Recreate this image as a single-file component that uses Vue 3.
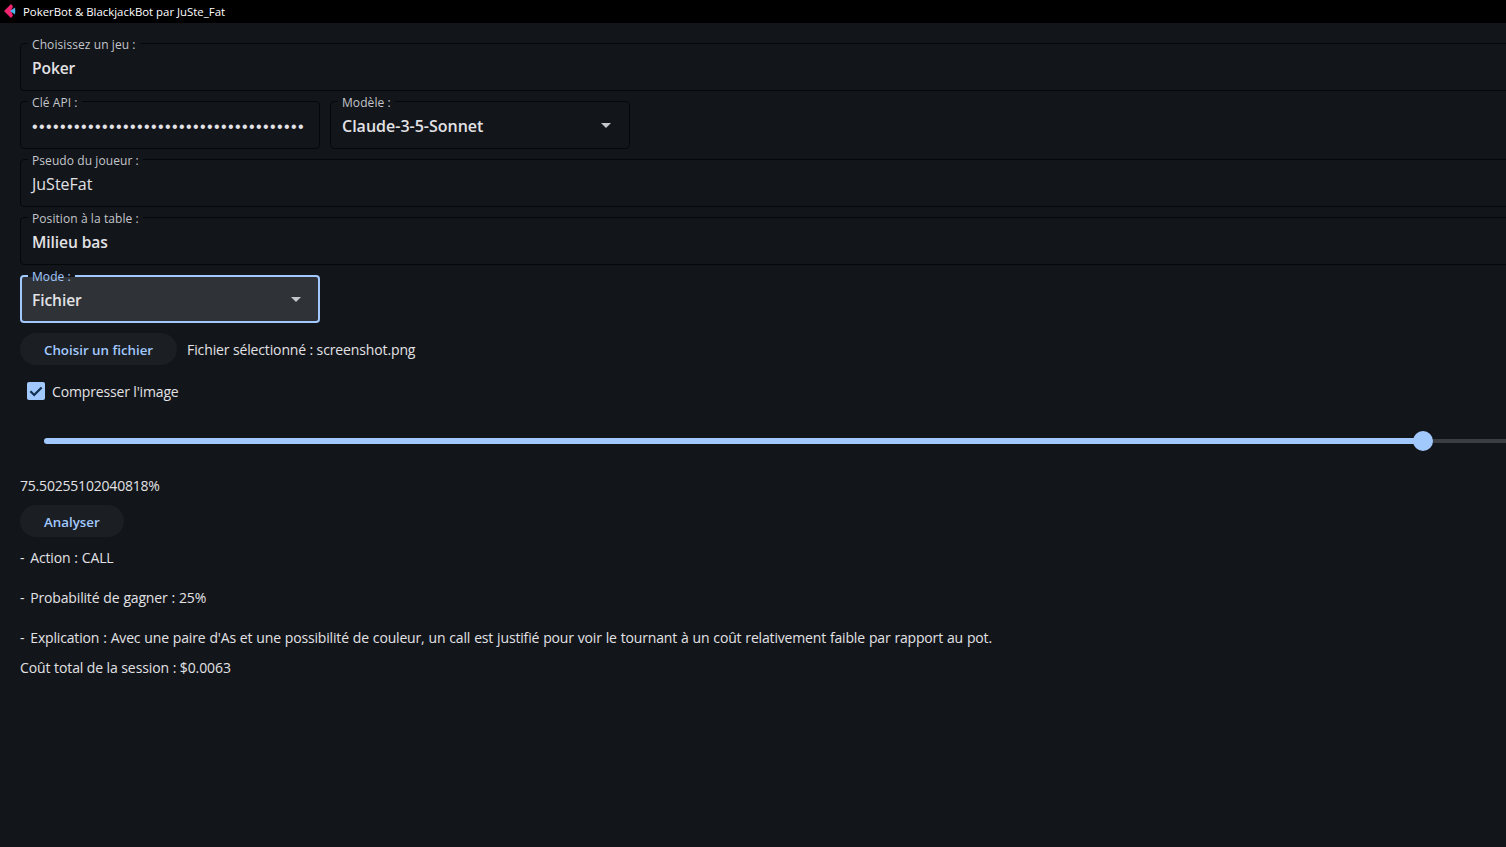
<script setup>
const pct = 75.50255102040818
</script>

<template>
  <div class="app">
    <header class="titlebar">
      <svg class="logo" width="23" height="23" viewBox="0 0 23 23">
        <path d="M4 11 L11 4 L13 6.5 L11 11 L13 15.5 L11 18 Z" fill="#f0246f"/>
        <path d="M10 11 L15 7.5 Q15.6 11 15 14.5 Z" fill="#4fb6ea"/>
      </svg>
      <span>PokerBot &amp; BlackjackBot par JuSte_Fat</span>
    </header>

    <main class="content">
      <div class="field">
        <label class="legend">Choisissez un jeu :</label>
        <span class="value strong">Poker</span>
      </div>

      <div class="row">
        <div class="field narrow">
          <label class="legend">Clé API :</label>
          <span class="value dots">•••••••••••••••••••••••••••••••••••••••</span>
        </div>
        <div class="field narrow">
          <label class="legend">Modèle :</label>
          <span class="value strong wide">Claude-3-5-Sonnet</span>
          <span class="caret"></span>
        </div>
      </div>

      <div class="field">
        <label class="legend">Pseudo du joueur :</label>
        <span class="value">JuSteFat</span>
      </div>

      <div class="field">
        <label class="legend">Position à la table :</label>
        <span class="value strong">Milieu bas</span>
      </div>

      <div class="field narrow focused">
        <label class="legend">Mode :</label>
        <span class="value strong">Fichier</span>
        <span class="caret"></span>
      </div>

      <div class="file-row">
        <button class="pill file-btn">Choisir un fichier</button>
        <span class="nudge">Fichier sélectionné : screenshot.png</span>
      </div>

      <div class="check-row">
        <span class="checkbox">
          <svg width="18" height="18" viewBox="0 0 18 18">
            <path d="M3.4 9.2 L7.2 13 L14.6 5.4" fill="none" stroke="#11304d" stroke-width="2.2"/>
          </svg>
        </span>
        <span class="nudge">Compresser l'image</span>
      </div>

      <div class="slider">
        <div class="track">
          <div class="fill" :style="{ width: pct + '%' }">
            <span class="thumb"></span>
          </div>
        </div>
      </div>

      <p class="percent">{{ pct }}%</p>

      <button class="pill analyse-btn">Analyser</button>

      <section class="result">
        <p><span class="dash">-</span> Action : CALL</p>
        <p><span class="dash">-</span> Probabilité de gagner : 25%</p>
        <p><span class="dash">-</span> Explication : Avec une paire d'As et une possibilité de couleur, un call est justifié pour voir le tournant à un coût relativement faible par rapport au pot.</p>
      </section>

      <p class="cost">Coût total de la session : $0.0063</p>
    </main>
  </div>
</template>

<style scoped>
.app {
  width: 1506px;
  height: 847px;
  overflow: hidden;
  background: #12151a;
  color: #e2e2e5;
  font-family: "Open Sans", "Noto Sans", sans-serif;
  font-size: 14px;
  line-height: 20px;
}
.titlebar {
  height: 23px;
  background: #000;
  color: #fff;
  display: flex;
  align-items: center;
  font-size: 11.4px;
  box-sizing: border-box;
}
.logo { flex: none; }
.content {
  width: 1870px;
  padding: 20px 0 0 20px;
  display: flex;
  flex-direction: column;
  align-items: flex-start;
}
.field {
  position: relative;
  box-sizing: border-box;
  width: 1870px;
  height: 48px;
  margin-bottom: 10px;
  border: 1px solid #05070a;
  border-radius: 4px;
  display: flex;
  align-items: center;
  padding: 0 11px;
  font-size: 16px;
}
.row { display: flex; gap: 10px; }
.narrow { width: 300px; }
.legend {
  position: absolute;
  left: 7px;
  top: -7px;
  padding: 0 4px;
  background: #12151a;
  font-size: 12px;
  line-height: 16px;
  letter-spacing: 0.08px;
  color: #c4c6cb;
}
.value { color: #e2e2e5; padding-top: 2px; }
.strong { font-weight: 600; font-size: 15.6px; letter-spacing: -0.1px; }
.wide { font-size: 16px; letter-spacing: 0; }
.dots {
  font-size: 16px;
  letter-spacing: 1.4px;
  font-family: "Liberation Sans", sans-serif;
  padding-top: 4px;
}
.caret {
  position: absolute;
  right: 18px;
  top: 21px;
  border-left: 5px solid transparent;
  border-right: 5px solid transparent;
  border-top: 5px solid #c4c6cb;
}
.focused {
  border: 2px solid #a2c9fe;
  background: #2f3236;
  padding: 0 10px;
}
.focused .legend {
  left: 6px;
  top: -8px;
  color: #a2c9fe;
  background: linear-gradient(#12151a 50%, #2f3236 50%);
}
.focused .caret { right: 17px; top: 20px; }
.file-row {
  display: flex;
  align-items: center;
  gap: 10px;
  margin-bottom: 10px;
  height: 32px;
  letter-spacing: -0.13px;
}
.nudge { padding-top: 2px; }
.pill {
  height: 32px;
  border: 0;
  border-radius: 16px;
  background: #1b1e23;
  color: #a2c9fe;
  font-family: inherit;
  font-size: 13.3px;
  font-weight: 600;
  padding: 2px 24px 0;
}
.check-row {
  display: flex;
  align-items: center;
  gap: 7px;
  padding-left: 7px;
  height: 32px;
  letter-spacing: -0.15px;
}
.checkbox {
  width: 18px;
  height: 18px;
  background: #a2c9fe;
  border-radius: 2px;
  display: block;
}
.checkbox svg { display: block; }
.slider {
  margin-top: 10px;
  height: 48px;
  width: 1874px;
  padding: 0 24px;
  box-sizing: border-box;
  display: flex;
  align-items: center;
}
.track {
  width: 100%;
  height: 4px;
  border-radius: 2px;
  background: #3a3d42;
}
.fill {
  position: relative;
  height: 6px;
  top: -1px;
  border-radius: 3px;
  background: #a2c9fe;
}
.thumb {
  position: absolute;
  right: -10px;
  top: -7px;
  width: 20px;
  height: 20px;
  border-radius: 50%;
  background: #a2c9fe;
}
p { margin: 0; }
.percent { margin-top: 11px; margin-bottom: 9px; letter-spacing: -0.2px; }
.analyse-btn { margin-bottom: 11px; }
.result { letter-spacing: -0.17px; word-spacing: 0.5px; }
.dash { margin-right: 2px; }
.result p { margin-bottom: 20px; }
.result p:last-child { margin-bottom: 10px; }
.cost { letter-spacing: -0.09px; }
</style>

<style>
html, body { margin: 0; overflow: hidden; background: #12151a; }
</style>
